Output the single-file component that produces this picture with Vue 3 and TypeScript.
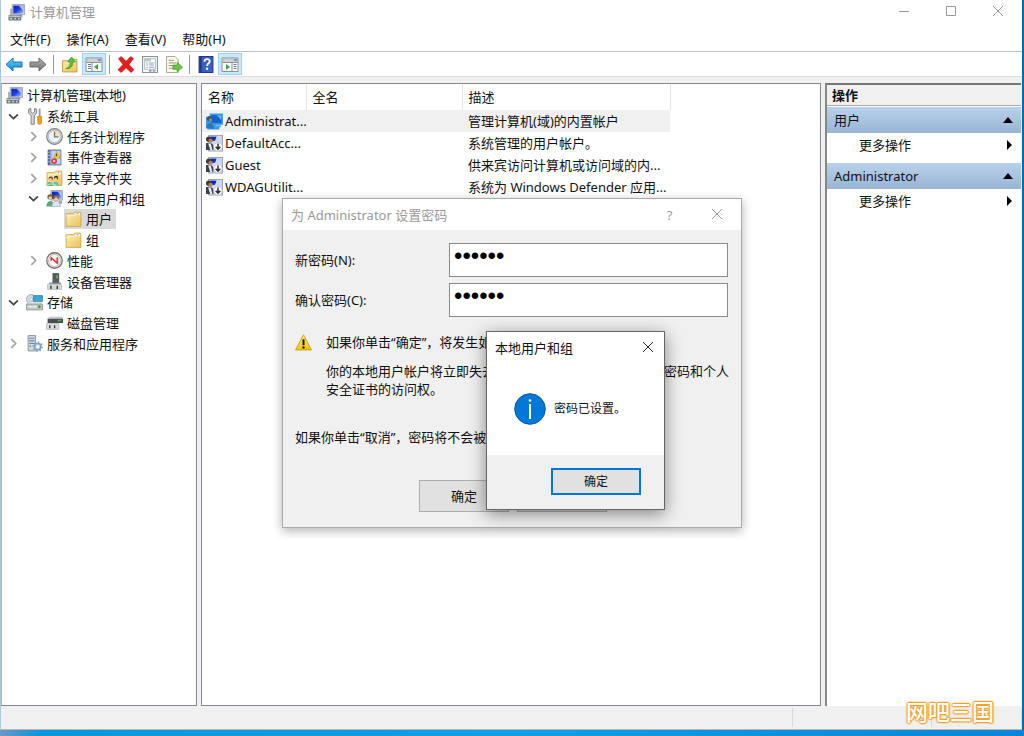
<script setup lang="ts">
import { ref } from 'vue'

interface TreeItem {
  label: string
  icon: string
  level: number
  state?: 'open' | 'closed'
}

interface Account {
  name: string
  fullName: string
  description: string
  icon: string
}

const menus: string[] = ['文件(F)', '操作(A)', '查看(V)', '帮助(H)']

const toolGroups: { icon: string; title: string; active?: boolean }[][] = [
  [
    { icon: 'back', title: '后退' },
    { icon: 'forward', title: '前进' },
  ],
  [
    { icon: 'up', title: '向上' },
    { icon: 'pane-left', title: '显示/隐藏控制台树', active: true },
  ],
  [
    { icon: 'delete', title: '删除' },
    { icon: 'properties', title: '属性' },
    { icon: 'export', title: '导出列表' },
  ],
  [
    { icon: 'help', title: '帮助' },
    { icon: 'pane-right', title: '显示/隐藏操作窗格', active: true },
  ],
]

const tree: TreeItem[] = [
  { label: '计算机管理(本地)', icon: 'computer', level: 0 },
  { label: '系统工具', icon: 'tools', level: 1, state: 'open' },
  { label: '任务计划程序', icon: 'clock', level: 2, state: 'closed' },
  { label: '事件查看器', icon: 'event', level: 2, state: 'closed' },
  { label: '共享文件夹', icon: 'share', level: 2, state: 'closed' },
  { label: '本地用户和组', icon: 'users', level: 2, state: 'open' },
  { label: '用户', icon: 'folder', level: 3 },
  { label: '组', icon: 'folder', level: 3 },
  { label: '性能', icon: 'perf', level: 2, state: 'closed' },
  { label: '设备管理器', icon: 'device', level: 2 },
  { label: '存储', icon: 'storage', level: 1, state: 'open' },
  { label: '磁盘管理', icon: 'disk', level: 2 },
  { label: '服务和应用程序', icon: 'services', level: 1, state: 'closed' },
]
const selectedNode = ref('用户')

const accounts: Account[] = [
  { name: 'Administrat...', fullName: '', description: '管理计算机(域)的内置帐户', icon: 'user-selected' },
  { name: 'DefaultAcc...', fullName: '', description: '系统管理的用户帐户。', icon: 'user-disabled' },
  { name: 'Guest', fullName: '', description: '供来宾访问计算机或访问域的内...', icon: 'user-disabled' },
  { name: 'WDAGUtilit...', fullName: '', description: '系统为 Windows Defender 应用...', icon: 'user-disabled' },
]
const selectedAccount = ref('Administrat...')

const actionGroups: string[] = ['用户', 'Administrator']

const password = ref('123456')
const confirmation = ref('123456')
</script>

<template>
  <div class="desktop">
    <svg class="defs" aria-hidden="true">
      <defs>
        <linearGradient id="g-blue" x1="0" y1="0" x2="0" y2="1">
          <stop offset="0" stop-color="#6fd0f8" /><stop offset="1" stop-color="#0a86d4" />
        </linearGradient>
        <linearGradient id="g-grey" x1="0" y1="0" x2="0" y2="1">
          <stop offset="0" stop-color="#b5b5b5" /><stop offset="1" stop-color="#6f6f6f" />
        </linearGradient>
        <linearGradient id="g-folder" x1="0" y1="0" x2="1" y2="1">
          <stop offset="0" stop-color="#fdeeb4" /><stop offset="1" stop-color="#e9c25e" />
        </linearGradient>
        <linearGradient id="g-screen" x1="0" y1="0" x2="1" y2="1">
          <stop offset="0" stop-color="#0c1fae" /><stop offset="0.5" stop-color="#1d3fe0" /><stop offset="1" stop-color="#a9c4ff" />
        </linearGradient>
        <linearGradient id="g-warn" x1="0" y1="0" x2="0" y2="1">
          <stop offset="0" stop-color="#fff27a" /><stop offset="1" stop-color="#eec412" />
        </linearGradient>
      </defs>

      <symbol id="i-computer" viewBox="0 0 16 16">
        <path d="M4 0.500h11.500v9.500h-11.500z" fill="#d5d8dc" stroke="#8d939a" stroke-width="0.700" />
        <rect x="5" y="1.500" width="9.500" height="7.500" fill="url(#g-screen)" />
        <path d="M10 1.500h4.500v5z" fill="#c6d8fb" opacity="0.800" />
        <path d="M9 10h4l1 2H9z" fill="#9da2a7" />
        <path d="M2 4.500h2.500v7H2z" fill="#a9adb2" />
        <path d="M0.500 10.500h12v5H0.500z" fill="#6b747c" />
        <path d="M1 11h11v1.200H1z" fill="#c4cad0" />
        <path d="M2 13h2v1.500H2zM6 13h1.500v1.500H6zM9.500 13h1.500v1.500H9.500z" fill="#cfd6dc" />
        <circle cx="3" cy="12.300" r="0.700" fill="#54c44a" />
      </symbol>

      <symbol id="i-tools" viewBox="0 0 16 16">
        <path d="M2.500 1v4l2.300 2v8.300h3V7L10 5V1L8 0.500v3.200L6.300 5 4.600 3.700V0.500z" fill="#d4d4d4" stroke="#808080" stroke-width="0.900" />
        <path d="M12 0.500h1.700v7.500h-1.700z" fill="#9a9a9a" />
        <path d="M11 8h3.700v5.500c0 2.600-3.700 2.600-3.700 0z" fill="#f3a41c" stroke="#b9730a" stroke-width="0.600" />
      </symbol>

      <symbol id="i-clock" viewBox="0 0 16 16">
        <circle cx="8" cy="8" r="7.400" fill="#cfd0d0" stroke="#7f8386" stroke-width="1" />
        <circle cx="8" cy="8" r="5.700" fill="#edf4fa" stroke="#a2a8ad" stroke-width="0.600" />
        <path d="M8 2.600A5.400 5.400 0 0 1 13.400 8H8z" fill="#f5dfb0" />
        <path d="M8 3.500V8.300h3.800" fill="none" stroke="#68737e" stroke-width="1.200" />
      </symbol>

      <symbol id="i-event" viewBox="0 0 16 16">
        <path d="M2 1h12v14H2z" fill="#a9b9da" stroke="#5a6c96" stroke-width="0.900" />
        <path d="M5.500 2h8v12h-8z" fill="#c5d3ec" />
        <path d="M2 1h2v14H2z" fill="#53648f" />
        <path d="M2.300 3h1M2.300 6h1M2.300 9h1M2.300 12h1" stroke="#e7edf8" />
        <path d="M10 2.500l3.500 6h-6z" fill="#f8cf1e" stroke="#a98608" stroke-width="0.500" />
        <path d="M10 4.500v2.300" stroke="#3d3203" stroke-width="0.900" />
        <circle cx="7.700" cy="11.300" r="2.700" fill="#dc3f3a" />
        <path d="M6.700 10.300l2 2m0-2l-2 2" stroke="#fff" stroke-width="0.800" />
      </symbol>

      <symbol id="i-folder" viewBox="0 0 16 16">
        <path d="M1 2.500h7l1-1.500h5.500v2h0.500v11.500H1z" fill="url(#g-folder)" stroke="#d1a549" stroke-width="0.800" />
        <path d="M9.800 2h4v1.500h-4z" fill="#fff" />
        <path d="M11 2h1.500v1.500H11z" fill="#5d9dd5" />
        <path d="M1.500 4.500h7.500l1-1h4.500" fill="none" stroke="#fff8dc" stroke-width="0.800" />
      </symbol>

      <symbol id="i-share" viewBox="0 0 16 16">
        <use href="#i-folder" width="16" height="16" />
        <circle cx="4.500" cy="8" r="2" fill="#664223" /><circle cx="4.200" cy="9" r="1.400" fill="#f1c9a0" />
        <path d="M0.500 15c0-5 6.500-5 6.500 0z" fill="#5cba80" />
        <circle cx="9.500" cy="7.500" r="2" fill="#34302d" /><circle cx="9.200" cy="8.500" r="1.400" fill="#efc59b" />
        <path d="M6.500 14.500c0-5 5.500-5 5.500 0z" fill="#6fbfb4" />
        <path d="M0.500 14.500c2-1.500 6-1.500 9 0" fill="none" stroke="#bdeed0" />
      </symbol>

      <symbol id="i-users" viewBox="0 0 16 16">
        <path d="M4.500 0.500h11v9h-11z" fill="#d5d8dc" stroke="#8d939a" stroke-width="0.700" />
        <rect x="5.500" y="1.500" width="9" height="7" fill="url(#g-screen)" />
        <path d="M11 1.500h3.500v5z" fill="#c6d8fb" opacity="0.800" />
        <path d="M12 10h3v3h-3z" fill="#a4a8ad" />
        <circle cx="3.800" cy="6.500" r="2.500" fill="#7b5a3c" /><circle cx="4" cy="7.600" r="1.700" fill="#efc79e" />
        <path d="M0.300 15.500c0-7 7.700-7 7.700 0z" fill="#5aa878" />
        <circle cx="9.500" cy="7.500" r="2.500" fill="#a06c31" /><circle cx="9.500" cy="8.700" r="1.700" fill="#f3cca5" />
        <path d="M5.500 15.700c0-7 8-7 8 0z" fill="#dde6f3" stroke="#8aa3c5" stroke-width="0.600" />
      </symbol>

      <symbol id="i-perf" viewBox="0 0 16 16">
        <circle cx="8" cy="8" r="7.300" fill="#f4f3f3" stroke="#77716d" stroke-width="1.200" />
        <circle cx="8" cy="8" r="5.600" fill="#fff" stroke="#bcb4ae" stroke-width="0.900" />
        <path d="M4 9.500V5M12 6v5" fill="none" stroke="#b9b3b3" stroke-width="0.700" />
        <path d="M5 8V5.500L10.500 10.500V5" fill="none" stroke="#dc2027" stroke-width="1.300" />
      </symbol>

      <symbol id="i-device" viewBox="0 0 16 16">
        <path d="M6.500 0.500h5.500v9H6.500z" fill="#555d61" stroke="#343a3d" stroke-width="0.600" />
        <path d="M9.500 2h1.700v3H9.500z" fill="#55b451" />
        <path d="M3 9h11v2H3z" fill="#868b8f" />
        <path d="M1.500 10.500h13v5h-13z" fill="#d6d9db" stroke="#a9adb0" stroke-width="0.600" />
        <path d="M4 12h1.300v3H4zM10 12h1.300v3H10z" fill="#303335" />
      </symbol>

      <symbol id="i-storage" viewBox="0 0 16 16">
        <circle cx="5" cy="5" r="4.500" fill="#d4dce2" stroke="#8a949b" stroke-width="0.700" />
        <circle cx="5" cy="5" r="1.300" fill="#fff" stroke="#8a949b" stroke-width="0.500" />
        <path d="M7 1.500h8.500v5.500H7z" fill="#36a8dc" stroke="#1a6b9a" stroke-width="0.600" />
        <path d="M1 9.500l1.500-2h11l1.500 2z" fill="#edf0f1" stroke="#a5abaf" stroke-width="0.500" />
        <path d="M0.500 9.500h15v5.500H0.500z" fill="#c4c9cc" stroke="#858b8f" stroke-width="0.700" />
        <path d="M2 12h8" stroke="#f2f4f5" />
        <circle cx="12.500" cy="12" r="1.400" fill="#35a62f" />
      </symbol>

      <symbol id="i-disk" viewBox="0 0 16 16">
        <path d="M3 2.500h12l1 2H1.500z" fill="#bfc4c7" />
        <path d="M1.500 4.500H16v4H1.500z" fill="#474d51" />
        <path d="M11 5.500h3.500v1.300H11z" fill="#45bb46" />
        <path d="M0.500 9h11.500v5.500H0.500z" fill="#dadddf" stroke="#a8acae" stroke-width="0.600" />
        <path d="M3 10.500h1.200v3H3zM7.500 10.500h1.200v3H7.500z" fill="#303335" />
      </symbol>

      <symbol id="i-services" viewBox="0 0 16 16">
        <path d="M2 0.500h7v14.500H2z" fill="#d0d8de" stroke="#7c8c99" stroke-width="0.800" />
        <path d="M3 3h5M3 5.500h5M3 8h5" stroke="#6c8ba2" stroke-width="1" />
        <circle cx="4" cy="10.500" r="0.800" fill="#51b650" />
        <circle cx="11" cy="11" r="3" fill="#cfe0ef" stroke="#7fa3c6" stroke-width="1.500" />
        <circle cx="11" cy="11" r="4.300" fill="none" stroke="#7fa3c6" stroke-width="1.300" stroke-dasharray="1.500 1.800" />
        <circle cx="11" cy="11" r="1.200" fill="#fff" />
      </symbol>

      <symbol id="i-user-disabled" viewBox="0 0 16 16">
        <path d="M2.500 0.500h13v14.500H2.500z" fill="#d3daea" stroke="#a0a4ac" stroke-width="1" />
        <path d="M4 1.500h6v4H4z" fill="#1528b8" />
        <path d="M10 1.500h4.500v5H8z" fill="#c9d8f8" />
        <circle cx="2.500" cy="4" r="2.500" fill="#3f3a35" /><circle cx="4.300" cy="5.500" r="2" fill="#b98259" />
        <path d="M0 14V7.500h3c2 0 4 1 4 3.500v3z" fill="#3c4350" />
        <path d="M2 8h2.500l1.500 6H4z" fill="#e8edf4" />
        <circle cx="11.300" cy="11" r="4" fill="#fdfdfd" stroke="#b4b8be" stroke-width="0.600" />
        <path d="M11.300 8v5m-2.200-2l2.200 2.300 2.200-2.300" fill="none" stroke="#2b2f34" stroke-width="1.400" />
      </symbol>

      <symbol id="i-user-selected" viewBox="0 0 16 16">
        <path d="M3.500 0.500H16v10.500h-2v2.500h-1.500v2H2L0 14V3.500h3.500z" fill="#3d9be4" />
        <path d="M5 2h9.500v7.500H5z" fill="#1263d2" />
        <path d="M10 2h4.500v4.500z" fill="#68b9f4" />
        <circle cx="3.500" cy="5.500" r="2.600" fill="#315675" /><circle cx="4.200" cy="6.500" r="1.600" fill="#8b8d88" />
        <path d="M0.500 14c0-6 7-6 7 1z" fill="#2a75b2" />
        <path d="M9 11h5v1.500H9z" fill="#75bce9" />
      </symbol>

      <symbol id="i-back" viewBox="0 0 18 16">
        <path d="M1 8l7-6.500v4h9v5H8v4z" fill="url(#g-blue)" stroke="#1474b4" stroke-width="1" stroke-linejoin="round" />
      </symbol>
      <symbol id="i-forward" viewBox="0 0 18 16">
        <path d="M17 8l-7-6.500v4H1v5h9v4z" fill="url(#g-grey)" stroke="#696969" stroke-width="1" stroke-linejoin="round" />
      </symbol>
      <symbol id="i-up" viewBox="0 0 16 16">
        <path d="M1 4.500h6l1-1.500h6.500v12H1z" fill="url(#g-folder)" stroke="#c49b42" stroke-width="0.900" />
        <path d="M4 12c3.500-1 4.200-3.500 4.200-6.500H6L9.500 1 13 5.500h-2.300c0 4-2 7-6.700 6.500z" fill="#55c634" stroke="#2d8b1d" stroke-width="0.600" />
      </symbol>
      <symbol id="i-pane-left" viewBox="0 0 18 16">
        <path d="M1 1.500h16v13.500H1z" fill="#fbfcfd" stroke="#85909b" />
        <path d="M1.500 2h15v3h-15z" fill="#a8b0b8" /><path d="M2.500 3.500h10" stroke="#f0f2f4" />
        <path d="M13.500 3.500h2" stroke="#506070" />
        <path d="M7 6v9M1.500 6h15" stroke="#85909b" />
        <path d="M3 8h3M3 10h3M3 12h3" stroke="#657f99" />
        <path d="M13 7.500v6L9 10.500z" fill="#34a536" />
      </symbol>
      <symbol id="i-pane-right" viewBox="0 0 18 16">
        <path d="M1 1.500h16v13.500H1z" fill="#fbfcfd" stroke="#85909b" />
        <path d="M1.500 2h15v3h-15z" fill="#a8b0b8" /><path d="M2.500 3.500h10" stroke="#f0f2f4" />
        <path d="M13.500 3.500h2" stroke="#506070" />
        <path d="M11 6v9M1.500 6h15" stroke="#85909b" />
        <path d="M12.500 8h3M12.500 10h3M12.500 12h3" stroke="#657f99" />
        <path d="M5 7.500v6l4-3z" fill="#34a536" />
      </symbol>
      <symbol id="i-delete" viewBox="0 0 16 16">
        <path d="M1 2.500L3.500 0.500 8 5l4.500-4.500L15 2.500 10.800 8l4.700 5-2.800 2.500L8 11l-4.500 4.500L0.500 13l4.700-5z" fill="#e5201c" stroke="#b50d0c" stroke-width="0.600" />
      </symbol>
      <symbol id="i-properties" viewBox="0 0 16 16">
        <path d="M1 0.500h14v15H1z" fill="#f6f8fa" stroke="#8a939c" />
        <path d="M3 2.500h10v10H3z" fill="#fff" stroke="#98a2ab" stroke-width="0.700" />
        <path d="M3 3h6v2H3z" fill="#b5c0ca" />
        <path d="M4.500 6.500h1.500M7 6.500h4.500M4.500 8.500h1.500M7 8.500h4.500M4.500 10.500h1.500M7 10.500h4.500" stroke="#8f9ba6" />
        <path d="M7 14h2.500M10.500 14H13" stroke="#718191" />
      </symbol>
      <symbol id="i-export" viewBox="0 0 16 16">
        <path d="M1 0.500h8l3 3v12H1z" fill="#fffbe9" stroke="#9f9a83" stroke-width="0.800" />
        <path d="M3 4h5M3 6.500h7M3 9h5M3 11.500h4" stroke="#8c8c84" stroke-width="0.900" />
        <path d="M7 8.500h4V6l5 4.500-5 4.500v-2.500H7z" fill="#65c83e" stroke="#368d22" stroke-width="0.600" />
      </symbol>
      <symbol id="i-help" viewBox="0 0 16 16">
        <path d="M1.500 0.500h13v15h-13z" fill="#3c5fc4" stroke="#20398a" />
        <path d="M2 1h2v14H2z" fill="#20398a" />
        <path d="M6.500 5.500c0-3.500 5-3.300 5-0.500 0 2-2.500 2-2.500 4.500" fill="none" stroke="#fff" stroke-width="1.700" />
        <circle cx="9" cy="12" r="1.100" fill="#fff" />
      </symbol>
    </svg>

    <main class="window">
      <header class="titlebar">
        <svg class="icon"><use href="#i-computer" /></svg>
        <h1>计算机管理</h1>
        <div class="controls">
          <button type="button" aria-label="最小化"><svg viewBox="0 0 12 12"><path d="M1 6.500h10" /></svg></button>
          <button type="button" aria-label="最大化"><svg viewBox="0 0 12 12"><path d="M1.500 1.500h9v9h-9z" /></svg></button>
          <button type="button" aria-label="关闭"><svg viewBox="0 0 12 12"><path d="M1 1l10 10M11 1L1 11" /></svg></button>
        </div>
      </header>

      <nav class="menubar">
        <button v-for="menu in menus" :key="menu" type="button">{{ menu }}</button>
      </nav>

      <div class="toolbar" role="toolbar">
        <div v-for="(group, index) in toolGroups" :key="index" class="tool-group">
          <button
            v-for="tool in group"
            :key="tool.icon"
            type="button"
            :aria-label="tool.title"
            :class="{ active: tool.active }"
          >
            <svg><use :href="`#i-${tool.icon}`" /></svg>
          </button>
        </div>
      </div>

      <div class="panes">
        <ul class="tree" role="tree">
          <li v-for="item in tree" :key="item.label" :class="`level-${item.level}`" role="treeitem">
            <span v-if="item.level > 0" class="chevron">
              <svg v-if="item.state" viewBox="0 0 10 10" :class="item.state">
                <path v-if="item.state === 'open'" d="M1 3l4 4 4-4" />
                <path v-else d="M3 1l4 4-4 4" />
              </svg>
            </span>
            <button
              type="button"
              class="node"
              :class="{ selected: item.label === selectedNode }"
              @click="selectedNode = item.label"
            >
              <svg class="icon"><use :href="`#i-${item.icon}`" /></svg>
              <span>{{ item.label }}</span>
            </button>
          </li>
        </ul>

        <section class="list">
          <table>
            <colgroup><col class="c-name" /><col class="c-full" /><col class="c-desc" /></colgroup>
            <thead>
              <tr><th>名称</th><th>全名</th><th>描述</th></tr>
            </thead>
            <tbody>
              <tr
                v-for="account in accounts"
                :key="account.name"
                :class="{ selected: account.name === selectedAccount }"
                @click="selectedAccount = account.name"
              >
                <td><span class="account"><svg class="icon"><use :href="`#i-${account.icon}`" /></svg>{{ account.name }}</span></td>
                <td>{{ account.fullName }}</td>
                <td>{{ account.description }}</td>
              </tr>
            </tbody>
          </table>
        </section>

        <aside class="actions">
          <h2>操作</h2>
          <section v-for="group in actionGroups" :key="group">
            <button type="button" class="group-title">
              {{ group }}<svg viewBox="0 0 10 10"><path d="M0 8l5-6 5 6z" /></svg>
            </button>
            <button type="button" class="more">
              更多操作<svg viewBox="0 0 10 10"><path d="M3 0l5 5-5 5z" /></svg>
            </button>
          </section>
        </aside>
      </div>

      <footer class="statusbar"><span></span><span></span><span></span></footer>
    </main>
    <div class="taskbar"></div>
    <div class="watermark">网吧三国</div>

    <form class="dialog" role="dialog" aria-labelledby="password-title" @submit.prevent>
      <header>
        <h2 id="password-title">为 Administrator 设置密码</h2>
        <button type="button" class="ask" aria-label="帮助">?</button>
        <button type="button" aria-label="关闭"><svg viewBox="0 0 12 12"><path d="M1 1l10 10M11 1L1 11" /></svg></button>
      </header>
      <div class="dialog-body">
        <div class="field">
          <label for="new-password">新密码(N):</label>
          <input id="new-password" v-model="password" type="password" />
        </div>
        <div class="field">
          <label for="confirm-password">确认密码(C):</label>
          <input id="confirm-password" v-model="confirmation" type="password" />
        </div>
        <div class="warning">
          <svg viewBox="0 0 16 16">
            <path d="M8 0.800L15.500 15H0.500z" fill="url(#g-warn)" stroke="#c9a20b" stroke-width="0.900" stroke-linejoin="round" />
            <path d="M8 5v5.500" stroke="#191500" stroke-width="1.900" /><circle cx="8" cy="12.700" r="1.100" fill="#191500" />
          </svg>
          <div>
            <p>如果你单击“确定”，将发生如下情况:</p>
            <p>你的本地用户帐户将立即失去对其所有加密文件、已保存的密码和个人安全证书的访问权。</p>
          </div>
        </div>
        <p class="cancel-note">如果你单击“取消”，密码将不会被更改。</p>
        <div class="dialog-buttons">
          <button type="submit">确定</button>
          <button type="button">取消</button>
        </div>
      </div>
    </form>

    <section class="message" role="alertdialog" aria-labelledby="message-title">
      <header>
        <h2 id="message-title">本地用户和组</h2>
        <button type="button" aria-label="关闭"><svg viewBox="0 0 12 12"><path d="M1 1l10 10M11 1L1 11" /></svg></button>
      </header>
      <div class="message-body">
        <svg viewBox="0 0 32 32">
          <circle cx="16" cy="16" r="15.300" fill="#0078d7" stroke="#0a5a9e" stroke-width="1" />
          <path d="M16 11v15" stroke="#fff" stroke-width="2" /><circle cx="16" cy="7.500" r="1.300" fill="#fff" />
        </svg>
        <p>密码已设置。</p>
      </div>
      <footer><button type="button">确定</button></footer>
    </section>
  </div>
</template>

<style>
body {
  margin: 0;
}
</style>

<style scoped>
.desktop {
  position: relative;
  display: flex;
  flex-direction: column;
  box-sizing: border-box;
  min-height: 100vh;
  padding-right: 2px;
  background: #0a68ae;
  color: #111;
  font: 13px/18px "Noto Sans", "Noto Sans CJK SC", sans-serif;
}
.defs {
  position: absolute;
  width: 0;
  height: 0;
}
button {
  padding: 0;
  border: 0;
  background: none;
  color: inherit;
  font: inherit;
}
h1, h2, p, ul {
  margin: 0;
  padding: 0;
  font: inherit;
}
.icon {
  flex: none;
  width: 17px;
  height: 17px;
}
.window {
  flex: 1;
  display: flex;
  flex-direction: column;
  border-left: 1px solid #a9cbdc;
  background: #f0f0f0;
}
.titlebar {
  display: flex;
  align-items: center;
  gap: 5px;
  height: 24px;
  padding: 0 1px 0 7px;
  background: #fff;
  color: #999;
}
.controls {
  display: flex;
  margin-left: auto;
}
.controls button {
  width: 47px;
  height: 24px;
}
.controls svg, .dialog header svg {
  width: 12px;
  height: 12px;
  fill: none;
  stroke: #999;
}
.menubar {
  display: flex;
  gap: 16px;
  height: 28px;
  padding: 2px 9px 0;
  box-sizing: border-box;
  border-bottom: 1px solid #c0c0c0;
  background: #fff;
}
.toolbar {
  display: flex;
  align-items: center;
  height: 24px;
  padding-left: 1px;
  border-bottom: 1px solid #dcdcdc;
  background: #fff;
}
.tool-group {
  display: flex;
}
.tool-group + .tool-group {
  margin-left: 3px;
  padding-left: 4px;
  border-left: 1px solid #999;
  height: 19px;
  align-items: center;
}
.tool-group button {
  display: grid;
  place-items: center;
  box-sizing: border-box;
  width: 24px;
  height: 22px;
}
.tool-group button.active {
  border: 1px solid #99d1ff;
  background: #cce8ff;
}
.tool-group svg {
  width: 18px;
  height: 17px;
}
.panes {
  flex: 1;
  display: grid;
  grid-template-columns: 196px 1fr 196px;
  gap: 4px;
  padding: 6px 1px 0 0;
}
.tree {
  display: grid;
  grid-template-rows: repeat(13, 1fr);
  align-self: stretch;
  box-sizing: border-box;
  padding: 1px 0 351px;
  border: 1px solid #828790;
  border-left-color: #b0b4ba;
  background: #fff;
  list-style: none;
}
.tree li {
  display: flex;
  align-items: center;
  gap: 5px;
}
.level-0 { padding-left: 3px; }
.level-1 { padding-left: 6px; }
.level-2 { padding-left: 26px; }
.level-3 { padding-left: 45px; }
.chevron {
  display: flex;
  width: 12px;
}
.chevron svg {
  width: 11px;
  height: 11px;
  fill: none;
  stroke: #a0a0a0;
  stroke-width: 1.5;
}
.chevron svg.open {
  stroke: #404040;
}
.node {
  display: flex;
  align-items: center;
  gap: 4px;
  height: 20px;
  padding: 0 4px 0 1px;
  white-space: nowrap;
}
.node.selected {
  background: #d9d9d9;
}
.list {
  border: 1px solid #828790;
  background: #fff;
}
table {
  width: 468px;
  table-layout: fixed;
  border-collapse: collapse;
}
.c-name { width: 104px; }
.c-full { width: 156px; }
.c-desc { width: 208px; }
th {
  height: 26px;
  padding: 0 6px;
  box-sizing: border-box;
  border-right: 1px solid #e5e5e5;
  font-weight: 400;
  text-align: left;
}
td {
  height: 22px;
  padding: 0 0 0 6px;
  white-space: nowrap;
}
td:first-child {
  padding-left: 4px;
}
tr.selected {
  background: #f0f0f0;
}
.account {
  display: flex;
  align-items: center;
  gap: 2px;
}
.actions {
  border-top: 2px solid #777;
  border-left: 2px solid #888;
  background: #fff;
}
.actions h2 {
  height: 20px;
  padding-left: 5px;
  border-bottom: 1px solid #aaa;
  margin-bottom: 1px;
  background: #f0f0f0;
  font-weight: 700;
  line-height: 20px;
}
.actions button {
  display: flex;
  align-items: center;
  justify-content: space-between;
  width: 100%;
}
.actions svg {
  width: 10px;
  height: 10px;
}
.group-title {
  height: 26px;
  padding: 0 8px 0 7px;
  background: linear-gradient(#b9d1ea, #99b4d5);
}
.more {
  height: 24px;
  margin-bottom: 6px;
  padding: 0 7px 0 32px;
}
.statusbar {
  display: grid;
  grid-template-columns: 792px 1fr 90px;
  height: 23px;
  border-bottom: 1px solid #b8b8b8;
}
.statusbar span {
  margin: 2px 0;
  border-right: 1px solid #d8d8d8;
}
.taskbar {
  height: 6px;
  margin-right: -2px;
  background: linear-gradient(90deg, #6d98c6, #0a96dc 40px, #0f9fe6 50%, #0a84d8);
}
.watermark {
  position: absolute;
  right: 30px;
  bottom: 11px;
  color: #fff;
  font-size: 22px;
  font-weight: 500;
  line-height: 28px;
  text-shadow: 1px 0 1px #f0a030, -1px 0 1px #f0a030, 0 1px 1px #f0a030, 0 -1px 1px #f0a030, 0 0 2px #f0a030, 0 0 3px #f0a030;
}
.dialog {
  position: absolute;
  top: 198px;
  left: 282px;
  box-sizing: border-box;
  width: 460px;
  border: 1px solid #aaa;
  background: #f0f0f0;
  box-shadow: 0 3px 10px rgba(0, 0, 0, 0.3);
}
.dialog header {
  display: flex;
  align-items: center;
  height: 31px;
  padding: 0 1px 0 8px;
  background: #fff;
  color: #999;
}
.dialog header h2 {
  flex: 1;
}
.dialog header button {
  width: 47px;
  height: 30px;
}
.dialog-body {
  padding: 13px 13px 15px 12px;
}
.field {
  display: grid;
  grid-template-columns: 154px 1fr;
  align-items: center;
  margin-bottom: 6px;
}
.field input {
  box-sizing: border-box;
  width: 100%;
  height: 34px;
  padding: 0 4px 8px;
  border: 1px solid #8a8a8a;
  outline: 0;
  background: #fff;
  color: #000;
  font: 24px/24px "Liberation Sans", sans-serif;
}
.warning {
  display: grid;
  grid-template-columns: 17px 1fr;
  gap: 14px;
  margin: 16px -4px 0 0;
}
.warning svg {
  width: 17px;
  height: 17px;
  margin-top: 1px;
}
.warning p + p {
  margin-top: 11px;
  line-height: 18px;
}
.cancel-note {
  margin-top: 30px;
}
.dialog-buttons {
  display: flex;
  gap: 8px;
  margin: 34px 0 0 124px;
}
.dialog-buttons button {
  box-sizing: border-box;
  width: 90px;
  height: 32px;
  border: 1px solid #adadad;
  background: #e1e1e1;
}
.message {
  position: absolute;
  top: 331px;
  left: 486px;
  box-sizing: border-box;
  width: 179px;
  border: 1px solid #666;
  background: #fff;
  box-shadow: 0 4px 16px rgba(0, 0, 0, 0.45);
}
.message header {
  display: flex;
  align-items: center;
  height: 31px;
  padding-left: 8px;
}
.message header h2 {
  flex: 1;
}
.message header button {
  width: 32px;
  height: 30px;
}
.message header svg {
  width: 12px;
  height: 12px;
  fill: none;
  stroke: #222;
}
.message-body {
  display: flex;
  align-items: center;
  gap: 8px;
  height: 92px;
  padding-left: 27px;
  font-size: 12px;
}
.message-body svg {
  width: 32px;
  height: 32px;
}
.message footer {
  display: flex;
  justify-content: flex-end;
  padding: 13px 23px 14px;
  background: #f0f0f0;
}
.message footer button {
  box-sizing: border-box;
  width: 90px;
  height: 27px;
  border: 2px solid #0078d7;
  background: #e1e1e1;
  font-size: 12px;
}
</style>
